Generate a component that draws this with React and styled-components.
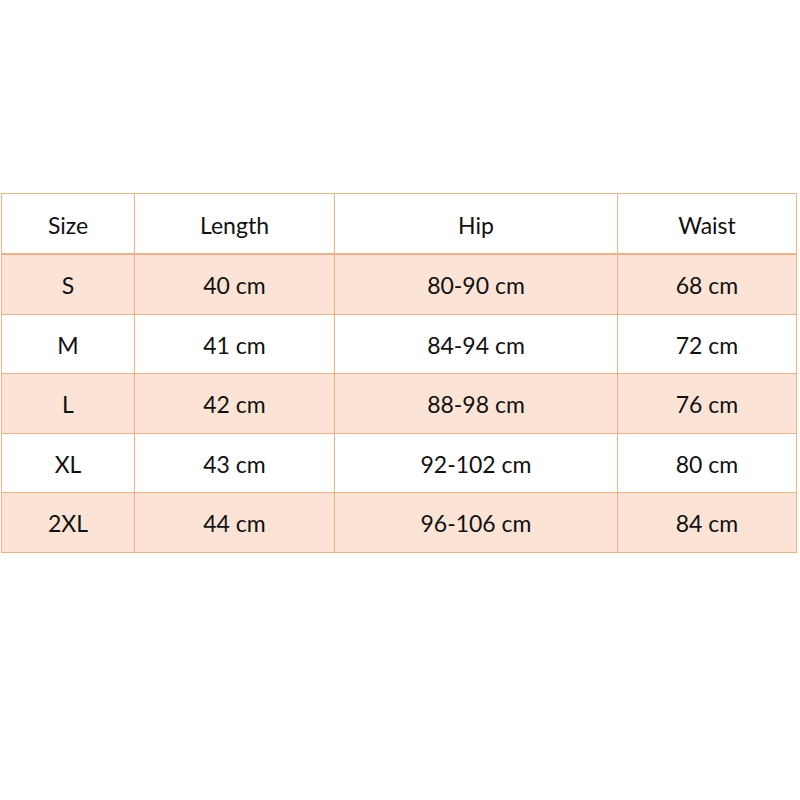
import styled, { createGlobalStyle } from "styled-components";

const GlobalStyle = createGlobalStyle`
  body {
    margin: 0;
    background: #ffffff;
    font-family: Lato, "Open Sans", sans-serif;
  }
`;

const Page = styled.div`
  width: 800px;
  height: 800px;
  padding-top: 193px;
  padding-left: 1px;
  box-sizing: border-box;
`;

const Table = styled.div`
  width: 796px;
  border-top: 1px solid #f4b183;
  border-left: 1px solid #f4b183;
  box-sizing: border-box;
`;

const Row = styled.div`
  display: grid;
  grid-template-columns: 133px 200px 283px 179px;
  height: ${(p) => (p.head ? "61px" : "59.5px")};
  background: ${(p) => (p.shaded ? "#fbe4d5" : "#ffffff")};
`;

const Cell = styled.div`
  display: flex;
  align-items: center;
  justify-content: center;
  padding-top: 2px;
  border-right: 1px solid #f4b183;
  border-bottom: ${(p) => (p.head ? "2px" : "1px")} solid #f4b183;
  font-size: 23px;
  color: #111111;
  box-sizing: border-box;
`;

const header = ["Size", "Length", "Hip", "Waist"];
const rows = [
  ["S", "40 cm", "80-90 cm", "68 cm"],
  ["M", "41 cm", "84-94 cm", "72 cm"],
  ["L", "42 cm", "88-98 cm", "76 cm"],
  ["XL", "43 cm", "92-102 cm", "80 cm"],
  ["2XL", "44 cm", "96-106 cm", "84 cm"],
];

export default function App() {
  return (
    <>
      <GlobalStyle />
      <Page>
        <Table>
          <Row head>
            {header.map((h) => (
              <Cell head key={h}>{h}</Cell>
            ))}
          </Row>
          {rows.map((r, i) => (
            <Row key={r[0]} shaded={i % 2 === 0}>
              {r.map((c, j) => (
                <Cell key={j}>{c}</Cell>
              ))}
            </Row>
          ))}
        </Table>
      </Page>
    </>
  );
}
